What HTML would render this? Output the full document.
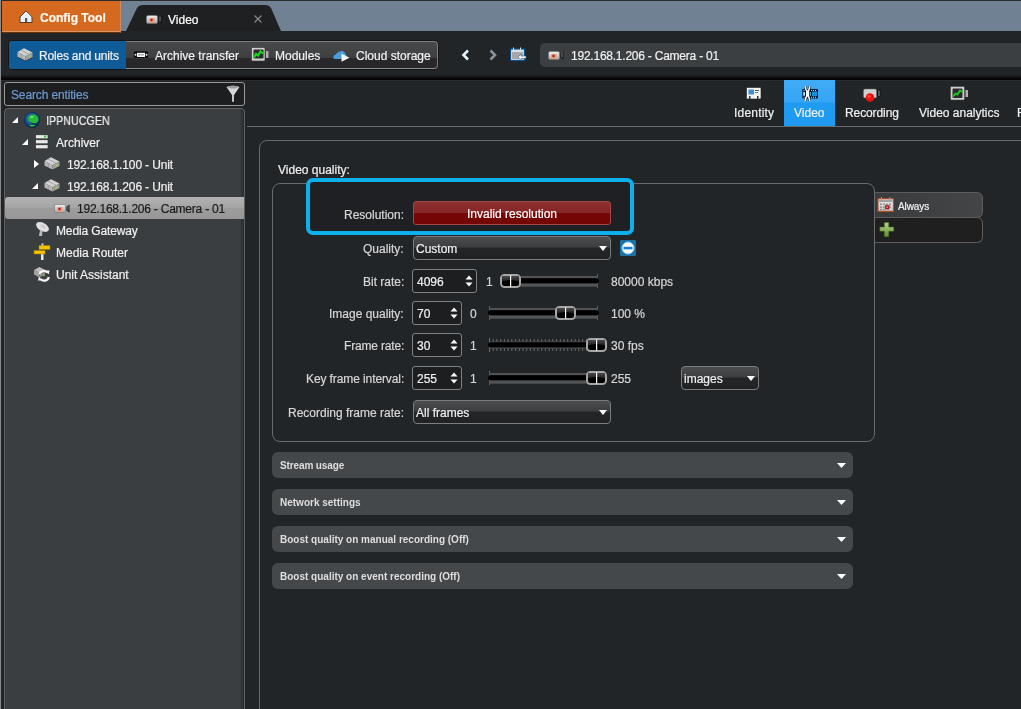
<!DOCTYPE html>
<html><head><meta charset="utf-8">
<style>
*{box-sizing:border-box;margin:0;padding:0}
html,body{width:1021px;height:709px;overflow:hidden;background:#222528;font-family:"Liberation Sans",sans-serif;font-size:12px;color:#f0f0f0}
.a{position:absolute}
.t{position:absolute;white-space:nowrap;line-height:16px;will-change:transform;-webkit-text-stroke:0.2px currentColor}
svg{position:absolute;display:block}
.lbl{color:#d6d6d6}
.dd{border:1px solid #7a7c7e;border-radius:4px;background:linear-gradient(#4a4c4e,#3c3e40 46%,#232527 50%,#202224)}
.bar{left:272px;width:581px;height:26px;border-radius:6px;background:#45484b}
.bt{left:280px;font-size:10px;font-weight:bold;color:#dedede;-webkit-text-stroke:0}
.spin{border:1px solid #7f8183;border-radius:3px;background:#1c1e20}
</style></head><body>
<!-- left window edge -->
<div class="a" style="left:0;top:0;width:1px;height:709px;background:#8a8a8a"></div>
<div class="a" style="left:1px;top:0;width:1020px;height:1px;background:#2a2c2e"></div>

<div class="a" style="left:1px;top:31px;width:1020px;height:46px;background:#222528"></div>
<!-- top strip -->
<div class="a" style="left:121px;top:1px;width:900px;height:30px;background:#6f8192"></div>
<!-- orange tab -->
<div class="a" style="left:2px;top:1px;width:119px;height:32px;background:#d5691f;border-bottom:1px solid #6a3208;border-right:1px solid #c98c64;box-shadow:inset 0 -1px 0 #d9956a"></div>
<!-- video tab -->
<svg style="left:120px;top:0" width="170" height="32"><path d="M6 31 L17 8 Q19 5 23 5 L146 5 Q149 5 151 8 L161 31 Z" fill="#1f2022"/></svg>

<div class="t" style="left:40px;top:10px;font-weight:bold;color:#fffaf0;font-size:12px">Config Tool</div>
<div class="t" style="left:168px;top:12px;color:#fff;font-size:12px">Video</div>
<svg style="left:253px;top:14px" width="10" height="10"><path d="M1.5 1.5L8.5 8.5M8.5 1.5L1.5 8.5" stroke="#8c8c8c" stroke-width="1.1"/></svg>

<!-- toolbar row -->
<div class="a" style="left:1px;top:75px;width:1020px;height:5px;background:linear-gradient(#222528,#111 40%,#000)"></div><div class="a" style="left:1px;top:80px;width:1020px;height:1px;background:#2b2e31"></div>

<!-- toolbar group -->
<div class="a" style="left:9px;top:41px;width:429px;height:28px;border-radius:4px;border:1px solid #7a7c7e;border-bottom-color:#8a8a8a;background:linear-gradient(#47494b,#3d3f41 60%,#29292b 61%,#262628);box-shadow:0 0 0 1px #141516"></div>
<div class="a" style="left:9px;top:41px;width:117px;height:28px;border-radius:4px 0 0 4px;background:#0e5b97"></div>
<div class="t" style="left:39px;top:48px;letter-spacing:-0.2px">Roles and units</div>
<div class="t" style="left:155px;top:48px">Archive transfer</div>
<div class="t" style="left:275px;top:48px">Modules</div>
<div class="t" style="left:356px;top:48px">Cloud storage</div>

<!-- nav -->
<!-- address bar -->
<div class="a" style="left:540px;top:43px;width:481px;height:24px;border-radius:5px 0 0 5px;background:#3b3f42"></div>
<div class="t" style="left:571px;top:48px;letter-spacing:-0.23px">192.168.1.206 - Camera - 01</div>

<!-- search -->
<div class="a" style="left:4px;top:82px;width:241px;height:24px;border-radius:3px;border:1px solid #9a9a9a;background:#1c1e20"></div>
<div class="t" style="left:11px;top:87px;color:#6e9ad0;letter-spacing:-0.14px">Search entities</div>

<!-- tree panel -->
<div class="a" style="left:4px;top:108px;width:241px;height:610px;border-radius:4px;border:1px solid #5e6164;background:#3a3e41;box-shadow:inset -4px 0 3px -2px rgba(0,0,0,.3)"></div>
<div class="a" style="left:5px;top:197px;width:239px;height:22px;border-radius:3px 0 0 3px;background:linear-gradient(#b2b2b2,#a4a4a4 50%,#9c9c9c 51%,#989898)"></div>
<div class="t" style="left:46px;top:113px;transform:scaleX(0.893);transform-origin:0 0">IPPNUCGEN</div>
<div class="t" style="left:56px;top:135px">Archiver</div>
<div class="t" style="left:67px;top:157px;letter-spacing:-0.14px">192.168.1.100 - Unit</div>
<div class="t" style="left:67px;top:179px;letter-spacing:-0.14px">192.168.1.206 - Unit</div>
<div class="t" style="left:77px;top:201px;color:#1a1a1a;letter-spacing:-0.23px">192.168.1.206 - Camera - 01</div>
<div class="t" style="left:56px;top:223px;letter-spacing:-0.13px">Media Gateway</div>
<div class="t" style="left:56px;top:245px">Media Router</div>
<div class="t" style="left:56px;top:267px">Unit Assistant</div>

<!-- tabs -->
<div class="a" style="left:247px;top:126px;width:774px;height:1px;background:#6a6d70"></div>
<div class="a" style="left:784px;top:80px;width:51px;height:46px;background:linear-gradient(#42abf6,#35a5f5 48%,#1f9bf1 50%,#1e9af0)"></div>
<div class="t" style="left:734px;top:105px;letter-spacing:0.2px">Identity</div>
<div class="t" style="left:794px;top:105px">Video</div>
<div class="t" style="left:845px;top:105px;letter-spacing:-0.1px">Recording</div>
<div class="t" style="left:919px;top:105px">Video analytics</div>
<div class="t" style="left:1017px;top:105px">R</div>

<!-- content -->
<div class="a" style="left:259px;top:140px;width:800px;height:600px;border-radius:8px;border:1px solid #67696b"></div>
<div class="t" style="left:278px;top:162px">Video quality:</div>
<div class="a" style="left:272px;top:183px;width:603px;height:259px;border-radius:8px;border:1px solid #67696b"></div>


<!-- blue highlight -->
<div class="a" style="left:310px;top:182px;width:320px;height:49px;background:#1e2023"></div>
<div class="a" style="left:306px;top:178px;width:328px;height:57px;border-radius:7px;border:4px solid #0db0ea"></div>

<!-- labels -->
<div class="t lbl" style="right:617px;top:207px">Resolution:</div>
<div class="t lbl" style="right:617px;top:241px">Quality:</div>
<div class="t lbl" style="right:617px;top:274px">Bit rate:</div>
<div class="t lbl" style="right:617px;top:306px">Image quality:</div>
<div class="t lbl" style="right:617px;top:338px;letter-spacing:-0.18px">Frame rate:</div>
<div class="t lbl" style="right:617px;top:371px;letter-spacing:-0.1px">Key frame interval:</div>
<div class="t lbl" style="right:617px;top:405px">Recording frame rate:</div>

<!-- red button -->
<div class="a" style="left:413px;top:201px;width:198px;height:24px;border-radius:3px;border:1px solid #a24646;background:linear-gradient(#8e3030,#862626 48%,#770707 50%,#740505)"></div>
<div class="t" style="left:413px;top:206px;width:198px;text-align:center;color:#fff">Invalid resolution</div>

<!-- quality dropdown -->
<div class="a dd" style="left:413px;top:236px;width:198px;height:24px"></div>
<div class="t" style="left:416px;top:241px">Custom</div>
<svg style="left:599px;top:246px" width="8" height="5"><path d="M0 0H8L4 5Z" fill="#fff"/></svg>
<div class="a" style="left:620px;top:240px;width:16px;height:16px;background:#1d6fa3;border-radius:1px"></div>
<svg style="left:620px;top:240px" width="16" height="16"><circle cx="8" cy="8" r="6" fill="#fff" stroke="#7fd0ff" stroke-width="1"/><rect x="3.5" y="6.8" width="9" height="2.6" fill="#1a7fd0"/></svg>

<!-- spinboxes -->
<div class="a spin" style="left:412px;top:269px;width:65px;height:24px"></div>
<div class="t" style="left:417px;top:274px">4096</div>
<div class="a spin" style="left:412px;top:301px;width:50px;height:24px"></div>
<div class="t" style="left:417px;top:306px">70</div>
<div class="a spin" style="left:412px;top:333px;width:50px;height:24px"></div>
<div class="t" style="left:417px;top:338px">30</div>
<div class="a spin" style="left:412px;top:366px;width:50px;height:24px"></div>
<div class="t" style="left:417px;top:371px">255</div>

<svg style="left:465px;top:275px" width="8" height="13"><path d="M0.5 4.5L4 0.5L7.5 4.5ZM0.5 7.5H7.5L4 11.5Z" fill="#fff"/></svg>
<svg style="left:450px;top:307px" width="8" height="13"><path d="M0.5 4.5L4 0.5L7.5 4.5ZM0.5 7.5H7.5L4 11.5Z" fill="#fff"/></svg>
<svg style="left:450px;top:339px" width="8" height="13"><path d="M0.5 4.5L4 0.5L7.5 4.5ZM0.5 7.5H7.5L4 11.5Z" fill="#fff"/></svg>
<svg style="left:450px;top:372px" width="8" height="13"><path d="M0.5 4.5L4 0.5L7.5 4.5ZM0.5 7.5H7.5L4 11.5Z" fill="#fff"/></svg>

<div class="t lbl" style="left:486px;top:274px">1</div>
<div class="t lbl" style="left:470px;top:306px">0</div>
<div class="t lbl" style="left:470px;top:338px">1</div>
<div class="t lbl" style="left:470px;top:371px">1</div>

<div class="t lbl" style="left:611px;top:274px">80000 kbps</div>
<div class="t lbl" style="left:611px;top:306px">100 %</div>
<div class="t lbl" style="left:611px;top:338px">30 fps</div>
<div class="t lbl" style="left:611px;top:371px">255</div>

<!-- images dropdown -->
<div class="a dd" style="left:681px;top:366px;width:78px;height:24px"></div>
<div class="t" style="left:684px;top:371px">images</div>
<svg style="left:747px;top:376px" width="8" height="5"><path d="M0 0H8L4 5Z" fill="#fff"/></svg>

<!-- recording frame rate dropdown -->
<div class="a dd" style="left:413px;top:400px;width:198px;height:24px"></div>
<div class="t" style="left:416px;top:405px">All frames</div>
<svg style="left:599px;top:410px" width="8" height="5"><path d="M0 0H8L4 5Z" fill="#fff"/></svg>

<svg style="left:0;top:0" width="1021" height="709">
<defs><linearGradient id="thg" x1="0" y1="0" x2="0" y2="1"><stop offset="0" stop-color="#4a4a4a"/><stop offset="1" stop-color="#1e1e1e"/></linearGradient></defs>

<rect x="597" y="274" width="1" height="14" fill="#666"/>
<rect x="504" y="276" width="94" height="2.3" fill="#505254"/>
<rect x="504" y="283.3" width="94" height="3.4" fill="#525456"/>
<rect x="504" y="278.3" width="95" height="5" rx="2.5" fill="#000"/>
<g transform="translate(500,274)"><rect x="1" y="1" width="19" height="12" rx="3.5" fill="#000" stroke="#a6a6a6" stroke-width="2"/>
<path d="M2 2H19V7.5Q10.5 4.5 2 7.5Z" fill="url(#thg)"/><rect x="10" y="1.5" width="1.2" height="11" fill="#fff"/></g>
<rect x="489" y="306" width="1" height="14" fill="#666"/>
<rect x="597" y="306" width="1" height="14" fill="#666"/>
<rect x="489" y="308" width="109" height="2.3" fill="#505254"/>
<rect x="489" y="315.3" width="109" height="3.4" fill="#525456"/>
<rect x="488" y="310.3" width="111" height="5" rx="2.5" fill="#000"/>
<g transform="translate(555,306)"><rect x="1" y="1" width="19" height="12" rx="3.5" fill="#000" stroke="#a6a6a6" stroke-width="2"/>
<path d="M2 2H19V7.5Q10.5 4.5 2 7.5Z" fill="url(#thg)"/><rect x="10" y="1.5" width="1.2" height="11" fill="#fff"/></g>
<rect x="489" y="338" width="1" height="14" fill="#666"/>
<rect x="597" y="338" width="1" height="14" fill="#666"/>
<rect x="489.00" y="339" width="1" height="3" fill="#6a6a6a"/>
<rect x="489.00" y="348" width="1" height="3" fill="#6a6a6a"/>
<rect x="492.72" y="339" width="1" height="3" fill="#6a6a6a"/>
<rect x="492.72" y="348" width="1" height="3" fill="#6a6a6a"/>
<rect x="496.45" y="339" width="1" height="3" fill="#6a6a6a"/>
<rect x="496.45" y="348" width="1" height="3" fill="#6a6a6a"/>
<rect x="500.17" y="339" width="1" height="3" fill="#6a6a6a"/>
<rect x="500.17" y="348" width="1" height="3" fill="#6a6a6a"/>
<rect x="503.90" y="339" width="1" height="3" fill="#6a6a6a"/>
<rect x="503.90" y="348" width="1" height="3" fill="#6a6a6a"/>
<rect x="507.62" y="339" width="1" height="3" fill="#6a6a6a"/>
<rect x="507.62" y="348" width="1" height="3" fill="#6a6a6a"/>
<rect x="511.34" y="339" width="1" height="3" fill="#6a6a6a"/>
<rect x="511.34" y="348" width="1" height="3" fill="#6a6a6a"/>
<rect x="515.07" y="339" width="1" height="3" fill="#6a6a6a"/>
<rect x="515.07" y="348" width="1" height="3" fill="#6a6a6a"/>
<rect x="518.79" y="339" width="1" height="3" fill="#6a6a6a"/>
<rect x="518.79" y="348" width="1" height="3" fill="#6a6a6a"/>
<rect x="522.52" y="339" width="1" height="3" fill="#6a6a6a"/>
<rect x="522.52" y="348" width="1" height="3" fill="#6a6a6a"/>
<rect x="526.24" y="339" width="1" height="3" fill="#6a6a6a"/>
<rect x="526.24" y="348" width="1" height="3" fill="#6a6a6a"/>
<rect x="529.97" y="339" width="1" height="3" fill="#6a6a6a"/>
<rect x="529.97" y="348" width="1" height="3" fill="#6a6a6a"/>
<rect x="533.69" y="339" width="1" height="3" fill="#6a6a6a"/>
<rect x="533.69" y="348" width="1" height="3" fill="#6a6a6a"/>
<rect x="537.41" y="339" width="1" height="3" fill="#6a6a6a"/>
<rect x="537.41" y="348" width="1" height="3" fill="#6a6a6a"/>
<rect x="541.14" y="339" width="1" height="3" fill="#6a6a6a"/>
<rect x="541.14" y="348" width="1" height="3" fill="#6a6a6a"/>
<rect x="544.86" y="339" width="1" height="3" fill="#6a6a6a"/>
<rect x="544.86" y="348" width="1" height="3" fill="#6a6a6a"/>
<rect x="548.59" y="339" width="1" height="3" fill="#6a6a6a"/>
<rect x="548.59" y="348" width="1" height="3" fill="#6a6a6a"/>
<rect x="552.31" y="339" width="1" height="3" fill="#6a6a6a"/>
<rect x="552.31" y="348" width="1" height="3" fill="#6a6a6a"/>
<rect x="556.03" y="339" width="1" height="3" fill="#6a6a6a"/>
<rect x="556.03" y="348" width="1" height="3" fill="#6a6a6a"/>
<rect x="559.76" y="339" width="1" height="3" fill="#6a6a6a"/>
<rect x="559.76" y="348" width="1" height="3" fill="#6a6a6a"/>
<rect x="563.48" y="339" width="1" height="3" fill="#6a6a6a"/>
<rect x="563.48" y="348" width="1" height="3" fill="#6a6a6a"/>
<rect x="567.21" y="339" width="1" height="3" fill="#6a6a6a"/>
<rect x="567.21" y="348" width="1" height="3" fill="#6a6a6a"/>
<rect x="570.93" y="339" width="1" height="3" fill="#6a6a6a"/>
<rect x="570.93" y="348" width="1" height="3" fill="#6a6a6a"/>
<rect x="574.66" y="339" width="1" height="3" fill="#6a6a6a"/>
<rect x="574.66" y="348" width="1" height="3" fill="#6a6a6a"/>
<rect x="578.38" y="339" width="1" height="3" fill="#6a6a6a"/>
<rect x="578.38" y="348" width="1" height="3" fill="#6a6a6a"/>
<rect x="582.10" y="339" width="1" height="3" fill="#6a6a6a"/>
<rect x="582.10" y="348" width="1" height="3" fill="#6a6a6a"/>
<rect x="585.83" y="339" width="1" height="3" fill="#6a6a6a"/>
<rect x="585.83" y="348" width="1" height="3" fill="#6a6a6a"/>
<rect x="589.55" y="339" width="1" height="3" fill="#6a6a6a"/>
<rect x="589.55" y="348" width="1" height="3" fill="#6a6a6a"/>
<rect x="593.28" y="339" width="1" height="3" fill="#6a6a6a"/>
<rect x="593.28" y="348" width="1" height="3" fill="#6a6a6a"/>
<rect x="597.00" y="339" width="1" height="3" fill="#6a6a6a"/>
<rect x="597.00" y="348" width="1" height="3" fill="#6a6a6a"/>
<rect x="489" y="341.5" width="109" height="1" fill="#555"/>
<rect x="489" y="347.5" width="109" height="1" fill="#555"/>
<rect x="488" y="342.3" width="111" height="5" rx="2.5" fill="#000"/>
<g transform="translate(586,338)"><rect x="1" y="1" width="19" height="12" rx="3.5" fill="#000" stroke="#a6a6a6" stroke-width="2"/>
<path d="M2 2H19V7.5Q10.5 4.5 2 7.5Z" fill="url(#thg)"/><rect x="10" y="1.5" width="1.2" height="11" fill="#fff"/></g>
<rect x="489" y="371" width="1" height="14" fill="#666"/>
<rect x="597" y="371" width="1" height="14" fill="#666"/>
<rect x="489" y="373" width="109" height="2.3" fill="#505254"/>
<rect x="489" y="380.3" width="109" height="3.4" fill="#525456"/>
<rect x="488" y="375.3" width="111" height="5" rx="2.5" fill="#000"/>
<g transform="translate(586,371)"><rect x="1" y="1" width="19" height="12" rx="3.5" fill="#000" stroke="#a6a6a6" stroke-width="2"/>
<path d="M2 2H19V7.5Q10.5 4.5 2 7.5Z" fill="url(#thg)"/><rect x="10" y="1.5" width="1.2" height="11" fill="#fff"/></g>
</svg>

<!-- right schedule panel -->
<div class="a" style="left:875px;top:192px;width:108px;height:26px;border-radius:0 6px 6px 0;border:1px solid #5a5c5e;border-left:none;background:linear-gradient(90deg,#393b3d,#434547)"></div>
<div class="a" style="left:875px;top:217px;width:108px;height:26px;border-radius:0 6px 6px 0;border:1px solid #5a5c5e;border-left:none;background:#1f1f20"></div>
<div class="t" style="left:898px;top:199px;font-size:10px;color:#f0f0f0;letter-spacing:-0.1px">Always</div>

<!-- collapsible bars -->
<div class="a bar" style="top:452px"></div><div class="t bt" style="top:458px;letter-spacing:-0.12px">Stream usage</div>
<div class="a bar" style="top:489px"></div><div class="t bt" style="top:495px">Network settings</div>
<div class="a bar" style="top:526px"></div><div class="t bt" style="top:532px">Boost quality on manual recording (Off)</div>
<div class="a bar" style="top:563px"></div><div class="t bt" style="top:569px">Boost quality on event recording (Off)</div>
<svg style="left:837px;top:463px" width="9" height="5"><path d="M0 0H9L4.5 5Z" fill="#fff"/></svg>
<svg style="left:837px;top:500px" width="9" height="5"><path d="M0 0H9L4.5 5Z" fill="#fff"/></svg>
<svg style="left:837px;top:537px" width="9" height="5"><path d="M0 0H9L4.5 5Z" fill="#fff"/></svg>
<svg style="left:837px;top:574px" width="9" height="5"><path d="M0 0H9L4.5 5Z" fill="#fff"/></svg>


<!-- ICONS -->
<svg style="left:19px;top:10px" width="14" height="14"><path d="M7 1L13 7V12.5H1V7Z" fill="#e6f2fc" stroke="#5a3a20" stroke-width="1"/><path d="M7 1.8L12.2 7" stroke="#fff" stroke-width=".8"/><rect x="6" y="8" width="2.2" height="4.5" fill="#6a5040"/></svg>
<svg style="left:146px;top:15px" width="17" height="10"><defs><linearGradient id="cg1" x1="0" y1="0" x2="0" y2="1"><stop offset="0" stop-color="#f0f0f0"/><stop offset="1" stop-color="#a8a8a8"/></linearGradient></defs><rect x="0.5" y="0.5" width="11" height="8" rx="1.5" fill="url(#cg1)" stroke="#777" stroke-width=".6"/><rect x="3.5" y="3" width="5" height="5" fill="#e89a78"/><circle cx="5.5" cy="5" r="1.2" fill="#b01818"/><path d="M12.5 2.5L15.5 0.5V8.5L12.5 6.5Z" fill="#111"/><rect x="13.5" y="1.5" width="1" height="5" fill="#888"/></svg>
<svg style="left:17px;top:47px" width="16" height="16"><path d="M0.5 5L7 1.2L15.5 5.5L8.5 9.2Z" fill="#d2d2d2"/><path d="M0.5 5L8.5 9.2V14L0.5 10Z" fill="#b6b6b6"/><path d="M8.5 9.2L15.5 5.5V10.5L8.5 14Z" fill="#9e9e9e"/><path d="M4 3L12 7.3M4.3 7.2V12" stroke="#8c8c8c" stroke-width=".7" fill="none"/><path d="M0.5 10L8.5 14L15.5 10.5" stroke="#1a1a1a" stroke-width="1" fill="none" opacity=".55"/><rect x="11.8" y="8.6" width="1.8" height="1.8" fill="#9cd048"/></svg>
<svg style="left:133px;top:50px" width="16" height="10"><rect x="0.5" y="1" width="15" height="7.5" rx="2" fill="#0a0a0a" stroke="#555" stroke-width=".5"/><rect x="4" y="2.8" width="8" height="4.2" fill="#fff"/><rect x="5" y="4" width="6" height="1.5" fill="#aaa"/><circle cx="2.5" cy="4.8" r="1" fill="#eee"/><circle cx="13.5" cy="4.8" r="1" fill="#eee"/></svg>
<svg style="left:251px;top:47px" width="18" height="15"><rect x="0.5" y="0.5" width="13.5" height="13.5" rx="1" fill="#cfcfcf" stroke="#333" stroke-width=".6"/><rect x="2.5" y="2.5" width="10" height="9" rx="1" fill="#2a2a2a"/><path d="M3 10.5L5 7L7 8.5L9.5 4.5L12 6.5" stroke="#19d419" stroke-width="2.2" fill="none"/><rect x="15" y="4" width="2.4" height="7" fill="#b0b0b0"/></svg>
<svg style="left:333px;top:49px" width="18" height="14"><path d="M2 10Q0 10 0.5 7.5Q1 5.5 3 5.5Q3.5 3 6 3Q7.5 1.5 9.5 2Q12 2.5 12.5 5Q14 6 13.5 8.5L12 10Z" fill="#4a9fd8"/><path d="M8.5 4.8L16.5 8.8L8.5 12.8Z" fill="#f4f4f4"/></svg>

<svg style="left:460px;top:49px" width="12" height="12"><path d="M8 1.5L3.5 6L8 10.5" stroke="#e8f4fc" stroke-width="2.6" fill="none"/></svg>
<svg style="left:487px;top:49px" width="12" height="12"><path d="M3.5 1.5L8 6L3.5 10.5" stroke="#87939b" stroke-width="2.6" fill="none"/></svg>
<svg style="left:510px;top:47px" width="17" height="15"><rect x="0.5" y="2" width="14" height="11.5" fill="#d8e0e8" stroke="#0e4f8a" stroke-width="1.2"/><rect x="2" y="5" width="11" height="7" fill="#a8a8a8"/><rect x="3" y="0.5" width="1" height="3" fill="#ddd"/><rect x="10" y="0.5" width="1" height="3" fill="#ddd"/><path d="M8 10L11 7V9H16V11.5H11V13.5Z" fill="#f4f8fc" stroke="#1a4f7a" stroke-width=".5"/></svg>
<svg style="left:548px;top:51px" width="17" height="10"><defs><linearGradient id="cg2" x1="0" y1="0" x2="0" y2="1"><stop offset="0" stop-color="#f0f0f0"/><stop offset="1" stop-color="#a8a8a8"/></linearGradient></defs><rect x="0.5" y="0.5" width="11" height="8" rx="1.5" fill="url(#cg2)" stroke="#777" stroke-width=".6"/><rect x="3.5" y="3" width="5" height="5" fill="#e89a78"/><circle cx="5.5" cy="5" r="1.2" fill="#b01818"/><path d="M12.5 2.5L15.5 0.5V8.5L12.5 6.5Z" fill="#111"/><rect x="13.5" y="1.5" width="1" height="5" fill="#888"/></svg>

<!-- tab icons -->
<svg style="left:746px;top:87px" width="16" height="13"><rect x="0.5" y="0.5" width="14.5" height="11.5" rx="1" fill="#f2f2f2" stroke="#222" stroke-width=".6"/><rect x="2.5" y="2.5" width="5.5" height="5" fill="#3d8fd8"/><rect x="9" y="3" width="4" height="1" fill="#555"/><rect x="9" y="5" width="3" height="1" fill="#777"/><rect x="3" y="9" width="1.5" height="3" fill="#333"/><rect x="11" y="9" width="1.5" height="3" fill="#333"/></svg>
<svg style="left:798px;top:83px" width="24" height="20"><rect x="4.3" y="6" width="15.7" height="9.6" rx=".5" fill="#041d3a"/><g fill="#b8d8f0"><rect x="5.5" y="7" width="1" height="1"/><rect x="13" y="7" width="1" height="1"/><rect x="15" y="7" width="1" height="1"/><rect x="17" y="7" width="1" height="1"/><rect x="5.5" y="13.8" width="1" height="1"/><rect x="13" y="13.8" width="1" height="1"/><rect x="15" y="13.8" width="1" height="1"/><rect x="17" y="13.8" width="1" height="1"/></g><rect x="5.2" y="9" width="1.8" height="3.8" fill="#a8e0f8"/><rect x="11.5" y="9" width="1.3" height="3.8" fill="#60b8e8"/><rect x="14" y="8.6" width="5" height="4.6" fill="#1890d8"/><path d="M7 3.2Q7.6 6.5 8.8 8V13Q7.6 14.8 7 17.8M11.8 3.2Q11.2 6.5 10.4 8V13Q11.2 14.8 11.8 17.8" stroke="#041d3a" stroke-width="2.6" fill="none"/><path d="M7 3.2Q7.6 6.5 8.8 8V13Q7.6 14.8 7 17.8M11.8 3.2Q11.2 6.5 10.4 8V13Q11.2 14.8 11.8 17.8" stroke="#fff" stroke-width="1.5" fill="none"/><rect x="8.6" y="7.5" width="2" height="6" fill="#fff"/></svg>
<svg style="left:863px;top:88px" width="19" height="15"><rect x="0.5" y="1" width="13" height="9" rx="1.5" fill="#d0d0d0" stroke="#666" stroke-width=".5"/><path d="M14 2.5L17.5 1.5V9L14 8Z" fill="#111"/><rect x="15.5" y="2.5" width="1" height="5.5" fill="#999"/><circle cx="7" cy="9.5" r="4.3" fill="#f01010"/><circle cx="6" cy="8.3" r="1.6" fill="#ff6060" opacity=".6"/></svg>
<svg style="left:950px;top:86px" width="19" height="15"><rect x="0.5" y="0.5" width="14" height="13.5" rx="1" fill="#cfcfcf" stroke="#444" stroke-width=".6"/><rect x="2.5" y="2.5" width="10" height="9.5" rx="1" fill="#2a2a2a"/><path d="M3 10.5L5.5 7.5L7.5 8.5L10 4.5L12.5 6" stroke="#18cc18" stroke-width="1.8" fill="none"/><rect x="15.5" y="4" width="2.5" height="7" fill="#b0b0b0"/></svg>

<!-- tree -->
<svg style="left:11px;top:116px" width="8" height="8"><path d="M1 7H7V1Z" fill="#fff"/></svg>
<svg style="left:24px;top:112px" width="17" height="17"><defs><radialGradient id="gl" cx=".45" cy=".4" r=".65"><stop offset="0" stop-color="#3a90d0"/><stop offset=".7" stop-color="#0e4478"/><stop offset="1" stop-color="#041a30"/></radialGradient></defs><circle cx="8" cy="8" r="7.8" fill="url(#gl)"/><path d="M4 5.5Q6 2.5 10 2.5Q14.5 3.5 14.5 7.5Q14 11 10.5 11.5Q8 11.5 6.5 10Q4 9.5 4 5.5Z" fill="#28b83a"/><path d="M7 10Q9 12 12 11.5L11 13Q8 13 7 10Z" fill="#0a2a3a"/><path d="M6 4.5Q8 3.5 10 4.5Q9 6 7 6Z" fill="#7ae87a"/><path d="M5 13.5Q8 15.5 11.5 13.5Q9 12.2 5 13.5Z" fill="#30c838"/><circle cx="8" cy="8" r="7.6" fill="none" stroke="#072a48" stroke-width=".6"/></svg>
<svg style="left:21px;top:138px" width="8" height="8"><path d="M1 7H7V1Z" fill="#fff"/></svg>
<svg style="left:35px;top:134px" width="14" height="16"><g fill="#e8e8e8" stroke="#222" stroke-width=".6"><rect x="0.5" y="0.8" width="12.5" height="4"/><rect x="0.5" y="5.8" width="12.5" height="4"/><rect x="0.5" y="10.8" width="12.5" height="4"/></g><rect x="9" y="1.5" width="2.2" height="2" fill="#22d022"/></svg>
<svg style="left:33px;top:159px" width="8" height="10"><path d="M1 1L6 5L1 9Z" fill="#fff"/></svg>
<svg style="left:44px;top:156px" width="16" height="16"><path d="M0.5 5L7 1.2L15.5 5.5L8.5 9.2Z" fill="#d2d2d2"/><path d="M0.5 5L8.5 9.2V14L0.5 10Z" fill="#b6b6b6"/><path d="M8.5 9.2L15.5 5.5V10.5L8.5 14Z" fill="#9e9e9e"/><path d="M4 3L12 7.3M4.3 7.2V12" stroke="#8c8c8c" stroke-width=".7" fill="none"/><path d="M0.5 10L8.5 14L15.5 10.5" stroke="#1a1a1a" stroke-width="1" fill="none" opacity=".55"/><rect x="11.8" y="8.6" width="1.8" height="1.8" fill="#9cd048"/></svg>
<svg style="left:31px;top:182px" width="8" height="8"><path d="M1 7H7V1Z" fill="#fff"/></svg>
<svg style="left:44px;top:178px" width="16" height="16"><path d="M0.5 5L7 1.2L15.5 5.5L8.5 9.2Z" fill="#d2d2d2"/><path d="M0.5 5L8.5 9.2V14L0.5 10Z" fill="#b6b6b6"/><path d="M8.5 9.2L15.5 5.5V10.5L8.5 14Z" fill="#9e9e9e"/><path d="M4 3L12 7.3M4.3 7.2V12" stroke="#8c8c8c" stroke-width=".7" fill="none"/><path d="M0.5 10L8.5 14L15.5 10.5" stroke="#1a1a1a" stroke-width="1" fill="none" opacity=".55"/><rect x="11.8" y="8.6" width="1.8" height="1.8" fill="#9cd048"/></svg>
<svg style="left:54px;top:204px" width="17" height="10"><defs><linearGradient id="cg3" x1="0" y1="0" x2="0" y2="1"><stop offset="0" stop-color="#f0f0f0"/><stop offset="1" stop-color="#a8a8a8"/></linearGradient></defs><rect x="0.5" y="0.5" width="11" height="8" rx="1.5" fill="url(#cg3)" stroke="#777" stroke-width=".6"/><rect x="3.5" y="3" width="5" height="5" fill="#e89a78"/><circle cx="5.5" cy="5" r="1.2" fill="#b01818"/><path d="M12.5 2.5L15.5 0.5V8.5L12.5 6.5Z" fill="#111"/><rect x="13.5" y="1.5" width="1" height="5" fill="#888"/></svg>
<svg style="left:34px;top:221px" width="16" height="17"><ellipse cx="8.5" cy="6" rx="7" ry="4" transform="rotate(30 8.5 6)" fill="#e0e0e0"/><ellipse cx="9" cy="5.5" rx="3" ry="1.5" transform="rotate(30 9 5.5)" fill="#c8c8c8"/><path d="M6 9L5 15H8L8.5 10" fill="#bbb"/></svg>
<svg style="left:33px;top:243px" width="18" height="18"><rect x="8" y="11" width="2.5" height="6" fill="#e8e8e8"/><path d="M6 2.5H17V6.5H6Z" fill="#f5c400" stroke="#a07800" stroke-width=".5"/><path d="M1 7.5H12V11H1Z" fill="#f5c400" stroke="#a07800" stroke-width=".5"/><rect x="8.5" y="0.5" width="2" height="2" fill="#ddd"/></svg>
<svg style="left:33px;top:265px" width="18" height="18"><path d="M1 5L6.5 2L12 5L6.5 8Z" fill="#bdbdbd"/><path d="M1 5L6.5 8V12.5L1 9.5Z" fill="#a2a2a2"/><path d="M6.5 8L12 5V9.5L6.5 12.5Z" fill="#8c8c8c"/><circle cx="11" cy="10.5" r="1" fill="#7ab848"/><path d="M6.3 9.2A4.6 4.6 0 0 1 14.2 7.6" stroke="#f6f6f6" stroke-width="2.2" fill="none"/><path d="M15.8 12A4.6 4.6 0 0 1 7.6 13.8" stroke="#f6f6f6" stroke-width="2.2" fill="none"/><path d="M12.2 5.6L16.6 5.4L15.6 9.6Z" fill="#f6f6f6"/><path d="M9.4 15.6L5 15.6L6 11.6Z" fill="#f6f6f6"/></svg>

<!-- filter -->
<svg style="left:226px;top:85px" width="14" height="18"><path d="M0.5 2Q7 -0.5 13.5 2L8 10V16.5H6V10Z" fill="#d8d8d8"/><ellipse cx="7" cy="2.2" rx="5" ry="1.4" fill="#9a9a9a"/><rect x="6" y="10" width="2" height="6.5" fill="#c8c8c8"/></svg>

<!-- calendar & plus -->
<svg style="left:877px;top:197px" width="18" height="16"><defs><linearGradient id="calg" x1="0" y1="0" x2="0" y2="1"><stop offset="0" stop-color="#e8e8e8"/><stop offset="1" stop-color="#c8c8c8"/></linearGradient><linearGradient id="plg" x1="0" y1="0" x2="0" y2="1"><stop offset="0" stop-color="#b4d488"/><stop offset="1" stop-color="#5e9030"/></linearGradient></defs><rect x="1" y="1.8" width="15.5" height="12.5" fill="url(#calg)" stroke="#b44a20" stroke-width="1.1"/><rect x="2" y="3" width="13.5" height="2" fill="#a0a0a0"/><g fill="#8a8a8a"><rect x="3" y="6.5" width="1.8" height="1.6"/><rect x="6" y="6.5" width="1.8" height="1.6"/><rect x="9" y="6.5" width="1.8" height="1.6"/><rect x="12" y="6.5" width="1.8" height="1.6"/><rect x="3" y="9.5" width="1.8" height="1.6"/><rect x="6" y="9.5" width="1.8" height="1.6"/><rect x="12" y="9.5" width="1.8" height="1.6"/><rect x="3" y="12" width="1.8" height="1.3"/><rect x="6" y="12" width="1.8" height="1.3"/></g><rect x="8.5" y="8.5" width="3.5" height="3.5" fill="#c02020" stroke="#801010" stroke-width=".5"/><rect x="9.6" y="9.6" width="1.3" height="1.3" fill="#f0a0a0"/><rect x="4" y="0" width="1" height="3" fill="#9a9a9a"/><rect x="12.5" y="0" width="1" height="3" fill="#9a9a9a"/></svg>
<svg style="left:879px;top:221px" width="17" height="18"><path d="M5.3 1.5H9.8V6H14.8V10.3H9.8V15.8H5.3V10.3H0.8V6H5.3Z" fill="url(#plg)" stroke="#3e5a1c" stroke-width=".5"/></svg>

</body></html>
